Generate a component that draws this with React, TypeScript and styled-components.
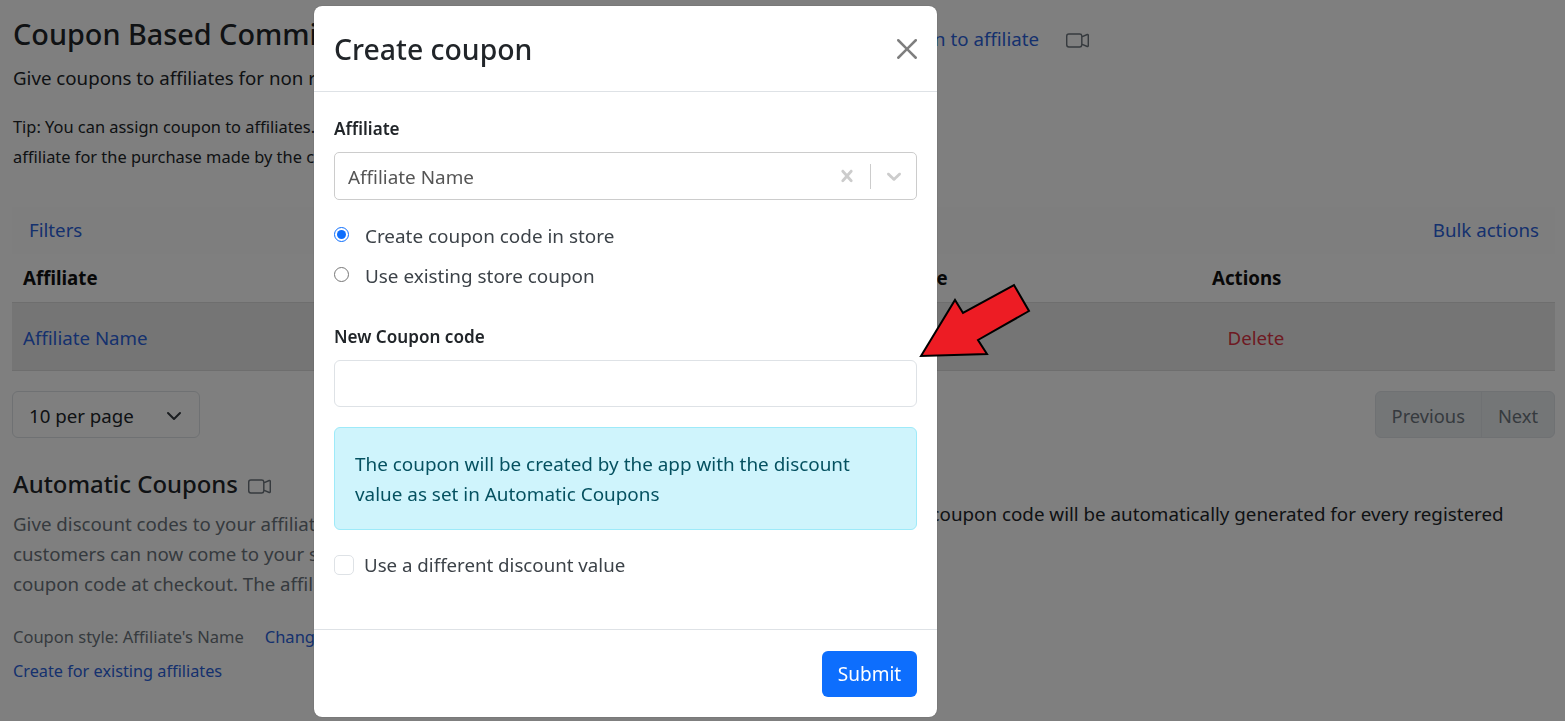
import React from "react";
import styled, { createGlobalStyle } from "styled-components";
import { BsCameraVideo } from "react-icons/bs";

const FONT = `"Noto Sans", "Open Sans", sans-serif`;

const GlobalStyle = createGlobalStyle`
  html, body {
    margin: 0;
    height: 100%;
    overflow: hidden;
    background: #fff;
  }
  * {
    box-sizing: border-box;
  }
  body {
    font-family: ${FONT};
    font-size: 18.7px;
    line-height: 30px;
    color: #212529;
  }
`;

const Page = styled.div`
  height: 721px;
  padding: 0 10px 0 12px;
  overflow: hidden;
`;

const TitleRow = styled.div`
  display: flex;
  align-items: center;
  height: 68px;
  padding-left: 1px;
`;

const PageTitle = styled.h1`
  flex: 0 0 auto;
  width: 719px;
  margin: 0;
  font-size: 28.8px;
  line-height: 36px;
  font-weight: 500;
  white-space: nowrap;
`;

const Anchor = styled.a`
  color: #2b62dc;
  text-decoration: none;
  white-space: nowrap;
`;

const TitleLink = styled(Anchor)`
  flex: 0 0 307px;
  margin-top: 10px;
  text-align: right;
`;

const VideoIcon = styled(BsCameraVideo)`
  flex: none;
  width: 23px;
  height: 23px;
  color: #6c757d;
`;

const TitleVideo = styled(VideoIcon)`
  margin: 12px 0 0 27px;
`;

const Lead = styled.p`
  margin: -5px 0 0 1px;
  white-space: nowrap;
`;

const Tip = styled.p`
  margin: 19px 0 0 1px;
  font-size: 16.4px;
  white-space: nowrap;
`;

const FilterBar = styled.div`
  display: flex;
  justify-content: space-between;
  align-items: center;
  height: 47px;
  margin-top: 35px;
  padding: 0 16px 2px 17px;
  background: #fdfdfd;
`;

const TableGrid = styled.div`
  display: grid;
  grid-template-columns: 804px 385px 1fr;
  align-items: center;
  padding: 0 11px;
`;

const TableHead = styled(TableGrid)`
  height: 49px;
  font-weight: 700;
  color: #111;
  border-bottom: 1px solid #dcdcdc;
`;

const TableRow = styled(TableGrid)`
  height: 68px;
  padding-top: 2px;
  background: #ebebeb;
  border-bottom: 1px solid #dcdcdc;
`;

const DeleteLink = styled.a`
  width: 88px;
  text-align: center;
  color: #dc3545;
`;

const PagerRow = styled.div`
  display: flex;
  justify-content: space-between;
  margin-top: 20px;
`;

const PerPage = styled.div`
  display: flex;
  align-items: center;
  justify-content: space-between;
  width: 188px;
  height: 47px;
  padding: 2px 17px 0 16px;
  border: 1px solid #dee2e6;
  border-radius: 6px;
`;

const Pager = styled.div`
  display: flex;
  height: 47px;
  border: 1px solid #dee2e6;
  border-radius: 6px;
  background: #e9ecef;
  color: #6c757d;
  font-size: 18.3px;
`;

const PagerItem = styled.span`
  display: flex;
  align-items: center;
  padding: 2px 16px 0;

  & + & {
    border-left: 1px solid #dee2e6;
  }
`;

const AutoGrid = styled.div`
  display: grid;
  grid-template-columns: 822px 1fr;
  margin-top: 28px;
  padding-left: 1px;
`;

const AutoTitleRow = styled.div`
  display: flex;
  align-items: center;
  gap: 10px;
`;

const AutoTitle = styled.h2`
  margin: 0;
  font-size: 23.9px;
  line-height: 36px;
  font-weight: 500;
`;

const AutoVideo = styled(VideoIcon)`
  margin-top: 5px;
`;

const Muted = styled.p`
  margin: 7px 0 0;
  color: #6c757d;
  white-space: nowrap;
`;

const AutoNote = styled.p`
  margin: 33px 0 0;
  padding-left: 12px;
  font-size: 18.8px;
`;

const SmallRow = styled.div`
  display: flex;
  gap: 21px;
  margin-top: 21px;
  font-size: 16.5px;
  line-height: 34px;
  color: #6c757d;
`;

const SmallLink = styled(Anchor)`
  display: block;
  font-size: 16.25px;
  line-height: 34px;
`;

const Backdrop = styled.div`
  position: fixed;
  inset: 0;
  background: rgba(0, 0, 0, 0.5);
`;

const Modal = styled.div`
  position: fixed;
  top: 6px;
  left: 314px;
  display: flex;
  flex-direction: column;
  width: 623px;
  height: 711px;
  background: #fff;
  border-radius: 8px;
  box-shadow: 0 0 1px rgba(0, 0, 0, 0.5);
  font-size: 18.9px;
  color: #212529;
`;

const ModalHeader = styled.div`
  display: flex;
  align-items: center;
  justify-content: space-between;
  height: 86px;
  padding: 0 20px;
  border-bottom: 1px solid #dee2e6;
`;

const ModalTitle = styled.h3`
  margin: 0;
  font-size: 28.4px;
  line-height: 36px;
  font-weight: 500;
`;

const CloseIcon = styled.svg`
  width: 20px;
  height: 20px;
  fill: #000;
  opacity: 0.5;
`;

const ModalBody = styled.div`
  flex: 1;
  padding: 23px 20px 0;
`;

const FieldLabel = styled.label`
  display: block;
  font-size: 17.1px;
  line-height: 28px;
  font-weight: 600;
`;

const AffiliateSelect = styled.div`
  display: flex;
  align-items: center;
  height: 48px;
  margin-top: 9px;
  padding: 0 10px 0 13px;
  border: 1px solid #ccc;
  border-radius: 5px;
`;

const SelectValue = styled.span`
  flex: 1;
  padding-top: 1px;
  color: #555;
`;

const SelectIcon = styled.svg`
  width: 24px;
  height: 24px;
  fill: #ccc;
`;

const SelectDivider = styled.span`
  width: 1px;
  height: 25px;
  margin: 0 11px;
  background: #ccc;
`;

const RadioGroup = styled.div`
  display: flex;
  flex-direction: column;
  gap: 10px;
  margin: 21px 0 0;
`;

const RadioLabel = styled.label`
  display: flex;
  align-items: center;
  gap: 16px;
  height: 30px;
  color: #3c4248;
`;

const RadioInput = styled.input`
  flex: none;
  width: 15px;
  height: 15px;
  margin: -3px 0 0;
  accent-color: #0d6efd;
`;

const CouponLabel = styled(FieldLabel)`
  margin-top: 32px;
`;

const CouponInput = styled.input`
  display: block;
  width: 100%;
  height: 47px;
  margin-top: 9px;
  border: 1px solid #dee2e6;
  border-radius: 6px;
  outline: none;
`;

const InfoAlert = styled.div`
  margin-top: 20px;
  padding: 21px 20px 20px;
  background: #cff4fc;
  border: 1px solid #9eeaf9;
  border-radius: 6px;
  color: #055160;
`;

const CheckRow = styled.label`
  display: flex;
  align-items: center;
  gap: 10px;
  margin-top: 20px;
  font-size: 18.7px;
  color: #3c4248;
`;

const CheckBox = styled.input`
  appearance: none;
  flex: none;
  width: 20px;
  height: 20px;
  margin: -1px 0 0;
  border: 1px solid #dee2e6;
  border-radius: 5px;
  background: #fff;
`;

const ModalFooter = styled.div`
  display: flex;
  justify-content: flex-end;
  height: 88px;
  padding: 21px 20px 0;
  border-top: 1px solid #dee2e6;
`;

const SubmitButton = styled.button`
  width: 95px;
  height: 46px;
  padding: 0 0 1px;
  border: 0;
  border-radius: 6px;
  background: #0d6efd;
  color: #fff;
  font-family: ${FONT};
  font-size: 19px;
`;

const ArrowMark = styled.svg`
  position: fixed;
  top: 280px;
  left: 915px;
  width: 120px;
  height: 80px;
`;

export default function App() {
  return (
    <>
      <GlobalStyle />
      <Page>
        <TitleRow>
          <PageTitle>Coupon Based Commission</PageTitle>
          <TitleLink href="#">Assign coupon to affiliate</TitleLink>
          <TitleVideo />
        </TitleRow>
        <Lead>Give coupons to affiliates for non referral sales</Lead>
        <Tip>
          Tip: You can assign coupon to affiliates. When the coupon is used, commission is given to the
          <br />
          affiliate for the purchase made by the customer
        </Tip>

        <FilterBar>
          <Anchor href="#">Filters</Anchor>
          <Anchor href="#">Bulk actions</Anchor>
        </FilterBar>
        <TableHead>
          <span>Affiliate</span>
          <span>Coupon code</span>
          <span>Actions</span>
        </TableHead>
        <TableRow>
          <Anchor href="#">Affiliate Name</Anchor>
          <span />
          <DeleteLink>Delete</DeleteLink>
        </TableRow>

        <PagerRow>
          <PerPage>
            10 per page
            <svg width="16" height="16" viewBox="0 0 16 16" fill="none" stroke="#343a40" strokeWidth="2" strokeLinecap="round" strokeLinejoin="round">
              <path d="M2 5l6 6 6-6" />
            </svg>
          </PerPage>
          <Pager>
            <PagerItem>Previous</PagerItem>
            <PagerItem>Next</PagerItem>
          </Pager>
        </PagerRow>

        <AutoGrid>
          <div>
            <AutoTitleRow>
              <AutoTitle>Automatic Coupons</AutoTitle>
              <AutoVideo />
            </AutoTitleRow>
            <Muted>
              Give discount codes to your affiliates to share.
              <br />
              customers can now come to your store and use the
              <br />
              coupon code at checkout. The affiliate gets the credit.
            </Muted>
            <SmallRow>
              <span>Coupon style: Affiliate's Name</span>
              <Anchor href="#">Change</Anchor>
            </SmallRow>
            <SmallLink href="#">Create for existing affiliates</SmallLink>
          </div>
          <AutoNote>A unique coupon code will be automatically generated for every registered affiliate.</AutoNote>
        </AutoGrid>
      </Page>

      <Backdrop />

      <Modal>
        <ModalHeader>
          <ModalTitle>Create coupon</ModalTitle>
          <CloseIcon viewBox="0 0 16 16">
            <path d="M.293.293a1 1 0 0 1 1.414 0L8 6.586 14.293.293a1 1 0 1 1 1.414 1.414L9.414 8l6.293 6.293a1 1 0 0 1-1.414 1.414L8 9.414l-6.293 6.293a1 1 0 0 1-1.414-1.414L6.586 8 .293 1.707a1 1 0 0 1 0-1.414z" />
          </CloseIcon>
        </ModalHeader>
        <ModalBody>
          <FieldLabel>Affiliate</FieldLabel>
          <AffiliateSelect>
            <SelectValue>Affiliate Name</SelectValue>
            <SelectIcon viewBox="0 0 20 20">
              <path d="M14.348 14.849c-0.469 0.469-1.229 0.469-1.697 0l-2.651-3.030-2.651 3.029c-0.469 0.469-1.229 0.469-1.697 0-0.469-0.469-0.469-1.229 0-1.697l2.758-3.15-2.759-3.152c-0.469-0.469-0.469-1.228 0-1.697s1.228-0.469 1.697 0l2.652 3.031 2.651-3.031c0.469-0.469 1.228-0.469 1.697 0s0.469 1.229 0 1.697l-2.758 3.152 2.758 3.15c0.469 0.469 0.469 1.229 0 1.698z" />
            </SelectIcon>
            <SelectDivider />
            <SelectIcon viewBox="0 0 20 20">
              <path d="M4.516 7.548c0.436-0.446 1.043-0.481 1.576 0l3.908 3.747 3.908-3.747c0.533-0.481 1.141-0.446 1.574 0 0.436 0.445 0.408 1.197 0 1.615-0.406 0.418-4.695 4.502-4.695 4.502-0.217 0.223-0.502 0.335-0.787 0.335s-0.57-0.112-0.789-0.335c0 0-4.287-4.084-4.695-4.502s-0.436-1.17 0-1.615z" />
            </SelectIcon>
          </AffiliateSelect>

          <RadioGroup>
            <RadioLabel>
              <RadioInput type="radio" name="coupon-source" defaultChecked />
              Create coupon code in store
            </RadioLabel>
            <RadioLabel>
              <RadioInput type="radio" name="coupon-source" />
              Use existing store coupon
            </RadioLabel>
          </RadioGroup>

          <CouponLabel>New Coupon code</CouponLabel>
          <CouponInput type="text" />

          <InfoAlert>
            The coupon will be created by the app with the discount
            <br />
            value as set in Automatic Coupons
          </InfoAlert>

          <CheckRow>
            <CheckBox type="checkbox" />
            Use a different discount value
          </CheckRow>
        </ModalBody>
        <ModalFooter>
          <SubmitButton>Submit</SubmitButton>
        </ModalFooter>
      </Modal>

      <ArrowMark viewBox="915 280 120 80">
        <polygon
          points="921,356 955,300 963,313 1014,285 1029,311 978,340 987,354"
          fill="#ed1c24"
          stroke="#000"
          strokeWidth="2"
        />
      </ArrowMark>
    </>
  );
}
